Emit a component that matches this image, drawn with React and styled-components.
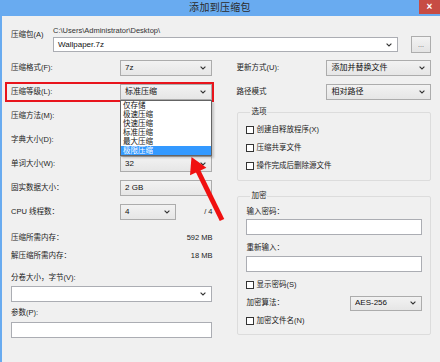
import styled, { createGlobalStyle, css } from "styled-components";

const GlobalStyle = createGlobalStyle`
  html, body {
    margin: 0;
    padding: 0;
    background: #f0f0f0;
  }
  body {
    font-family: "Liberation Sans", "Noto Sans CJK SC", sans-serif;
  }
`;

const frameBlue = "#69abf0";

const Window = styled.div`
  position: relative;
  width: 440px;
  height: 362px;
  overflow: hidden;
  display: flex;
  flex-direction: column;
  background: #f0f0f0;
  color: #1b1b1b;
  font-size: 7.5px;
  line-height: 10px;
`;

const TitleBar = styled.div`
  height: 16px;
  flex-shrink: 0;
  background: ${frameBlue};
  display: grid;
  grid-template-columns: 1fr auto 1fr;
`;

const Title = styled.div`
  grid-column: 2;
  font-size: 10px;
  line-height: 15px;
  color: #2c2c2c;
  letter-spacing: 0.3px;
`;

const CloseButton = styled.div`
  justify-self: end;
  width: 21px;
  height: 14px;
  background: #c74c44;
  color: #fff;
  font-size: 10px;
  line-height: 13px;
  text-align: center;
  font-weight: bold;
`;

const Body = styled.div`
  flex: 1;
  border-left: 2px solid ${frameBlue};
  padding: 9px 9px 0 9px;
`;

const TopRow = styled.div`
  display: flex;
  align-items: flex-start;
`;

const ArchiveLabel = styled.div`
  width: 42px;
  margin-top: 5px;
`;

const PathBlock = styled.div`
  flex: 1;
  display: flex;
  flex-direction: column;
  gap: 1px;
`;

const PathText = styled.div`
  margin-top: 1px;
  color: #333;
`;

const BrowseButton = styled.div`
  width: 20px;
  height: 17px;
  box-sizing: border-box;
  margin: 11px 0 0 13px;
  border: 1px solid #adadad;
  background: linear-gradient(#f3f3f3, #e4e4e4);
  font-size: 7px;
  line-height: 15px;
  text-align: center;
  color: #555;
`;

const Field = styled.div`
  box-sizing: border-box;
  width: ${(p) => p.$width || "100%"};
  height: ${(p) => p.$height || 16}px;
  display: flex;
  align-items: center;
  justify-content: space-between;
  padding: 0 5px 0 4px;
  border: 1px solid ${(p) => (p.$white ? "#abadb3" : "#acacac")};
  background: ${(p) => (p.$white ? "#fff" : "linear-gradient(#f2f2f2, #e6e6e6)")};
  font-size: 8px;
  color: #111;
`;

const Columns = styled.div`
  display: flex;
  gap: 24px;
  margin-top: 3px;
`;

const LeftColumn = styled.div`
  width: 202px;
  display: flex;
  flex-direction: column;
`;

const RightColumn = styled.div`
  width: 195px;
  display: flex;
  flex-direction: column;
`;

const SettingRow = styled.div`
  position: relative;
  display: grid;
  grid-template-columns: ${(p) => p.$labelWidth}px 1fr;
  align-items: center;
  height: 24px;
  ${(p) =>
    p.$marked &&
    css`
      &::before {
        content: "";
        position: absolute;
        top: 2px;
        bottom: 2px;
        left: -6px;
        right: -2px;
        border: 2px solid #e8141c;
        pointer-events: none;
      }
    `}
`;

const ControlCell = styled.div`
  display: flex;
  align-items: center;
  justify-content: space-between;
`;

const SelectAnchor = styled.div`
  position: relative;
`;

const Popup = styled.ul`
  position: absolute;
  top: 100%;
  left: 0;
  right: 0;
  z-index: 2;
  margin: 0;
  padding: 0;
  list-style: none;
  background: #fff;
  border: 1px solid #646464;
  box-shadow: 2px 2px 2px rgba(0, 0, 0, 0.18);
`;

const Option = styled.li`
  height: 9px;
  line-height: 9px;
  padding-left: 2px;
  font-size: 7.5px;
  background: ${(p) => (p.$active ? "#3399ff" : "transparent")};
  color: ${(p) => (p.$active ? "#fff" : "#111")};
`;

const InfoRow = styled.div`
  display: flex;
  align-items: center;
  justify-content: space-between;
  height: 18px;
  margin-top: ${(p) => p.$top || 0}px;
`;

const FieldLabel = styled.div`
  margin-top: ${(p) => p.$top || 0}px;
`;

const FieldBox = styled(Field)`
  margin-top: ${(p) => p.$top || 0}px;
`;

const Group = styled.fieldset`
  margin: ${(p) => p.$top}px 0 0 1px;
  padding: ${(p) => p.$pad};
  border: 1px solid #dcdcdc;
  border-radius: 2px;
  min-width: 0;
`;

const GroupTitle = styled.legend`
  margin-left: 4px;
  padding: 0 1px;
  line-height: 10px;
`;

const CheckRow = styled.div`
  display: flex;
  align-items: center;
  gap: 2px;
  height: 18px;
  margin-top: ${(p) => p.$top || 0}px;
`;

const CheckBox = styled.span`
  width: 8px;
  height: 8px;
  box-sizing: border-box;
  border: 1px solid #333;
  background: #fff;
`;

const Arrow = styled.svg`
  position: absolute;
  left: 180px;
  top: 150px;
  width: 50px;
  height: 80px;
  pointer-events: none;
  z-index: 3;
`;

const Chevron = () => (
  <svg width="6" height="4" viewBox="0 0 6 4">
    <path d="M0.6 0.6 L3 3 L5.4 0.6" fill="none" stroke="#333" strokeWidth="1.1" />
  </svg>
);

const Select = ({ value, width, white, height }) => (
  <Field $width={width} $white={white} $height={height}>
    <span>{value}</span>
    <Chevron />
  </Field>
);

const levels = ["仅存储", "极速压缩", "快速压缩", "标准压缩", "最大压缩", "极限压缩"];

const CheckItem = ({ text, top }) => (
  <CheckRow $top={top}>
    <CheckBox />
    <span>{text}</span>
  </CheckRow>
);

export default function App() {
  return (
    <>
      <GlobalStyle />
      <Window>
        <TitleBar>
          <Title>添加到压缩包</Title>
          <CloseButton>×</CloseButton>
        </TitleBar>
        <Body>
          <TopRow>
            <ArchiveLabel>压缩包(A)</ArchiveLabel>
            <PathBlock>
              <PathText>{"C:\\Users\\Administrator\\Desktop\\"}</PathText>
              <Select value="Wallpaper.7z" white height={15} />
            </PathBlock>
            <BrowseButton>...</BrowseButton>
          </TopRow>

          <Columns>
            <LeftColumn>
              <SettingRow $labelWidth={109}>
                <span>压缩格式(F):</span>
                <Select value="7z" />
              </SettingRow>
              <SettingRow $labelWidth={109} $marked>
                <span>压缩等级(L):</span>
                <SelectAnchor>
                  <Select value="标准压缩" />
                  <Popup>
                    {levels.map((l, i) => (
                      <Option key={l} $active={i === levels.length - 1}>
                        {l}
                      </Option>
                    ))}
                  </Popup>
                </SelectAnchor>
              </SettingRow>
              <SettingRow $labelWidth={109}>
                <span>压缩方法(M):</span>
                <Select />
              </SettingRow>
              <SettingRow $labelWidth={109}>
                <span>字典大小(D):</span>
                <Select />
              </SettingRow>
              <SettingRow $labelWidth={109}>
                <span>单词大小(W):</span>
                <Select value="32" />
              </SettingRow>
              <SettingRow $labelWidth={109}>
                <span>固实数据大小：</span>
                <Field>2 GB</Field>
              </SettingRow>
              <SettingRow $labelWidth={109}>
                <span>CPU 线程数：</span>
                <ControlCell>
                  <Select value="4" width="56px" />
                  <span>/ 4</span>
                </ControlCell>
              </SettingRow>

              <InfoRow $top={5}>
                <span>压缩所需内存：</span>
                <span>592 MB</span>
              </InfoRow>
              <InfoRow>
                <span>解压缩所需内存：</span>
                <span>18 MB</span>
              </InfoRow>

              <FieldLabel $top={8}>分卷大小，字节(V):</FieldLabel>
              <FieldBox $white $top={3}>
                <span />
                <Chevron />
              </FieldBox>
              <FieldLabel $top={6}>参数(P):</FieldLabel>
              <FieldBox $white $top={4} />
            </LeftColumn>

            <RightColumn>
              <SettingRow $labelWidth={90}>
                <span>更新方式(U):</span>
                <Select value="添加并替换文件" />
              </SettingRow>
              <SettingRow $labelWidth={90}>
                <span>路径模式</span>
                <Select value="相对路径" />
              </SettingRow>

              <Group $top={3} $pad="4px 8px 5px 8px">
                <GroupTitle>选项</GroupTitle>
                <CheckItem text="创建自释放程序(X)" />
                <CheckItem text="压缩共享文件" />
                <CheckItem text="操作完成后删除源文件" />
              </Group>

              <Group $top={10} $pad="6px 8px 4px 8px">
                <GroupTitle>加密</GroupTitle>
                <FieldLabel>输入密码：</FieldLabel>
                <FieldBox $white $top={2} />
                <FieldLabel $top={8}>重新输入：</FieldLabel>
                <FieldBox $white $top={3} />
                <CheckItem text="显示密码(S)" top={4} />
                <InfoRow>
                  <span>加密算法：</span>
                  <Select value="AES-256" width="72px" height={15} />
                </InfoRow>
                <CheckItem text="加密文件名(N)" />
              </Group>
            </RightColumn>
          </Columns>
        </Body>

        <Arrow viewBox="0 0 50 80">
          <line x1="18" y1="21" x2="42" y2="70" stroke="#f01010" strokeWidth="5" />
          <polygon points="11.5,7 26.4,17.7 10,25.3" fill="#f01010" />
        </Arrow>
      </Window>
    </>
  );
}
